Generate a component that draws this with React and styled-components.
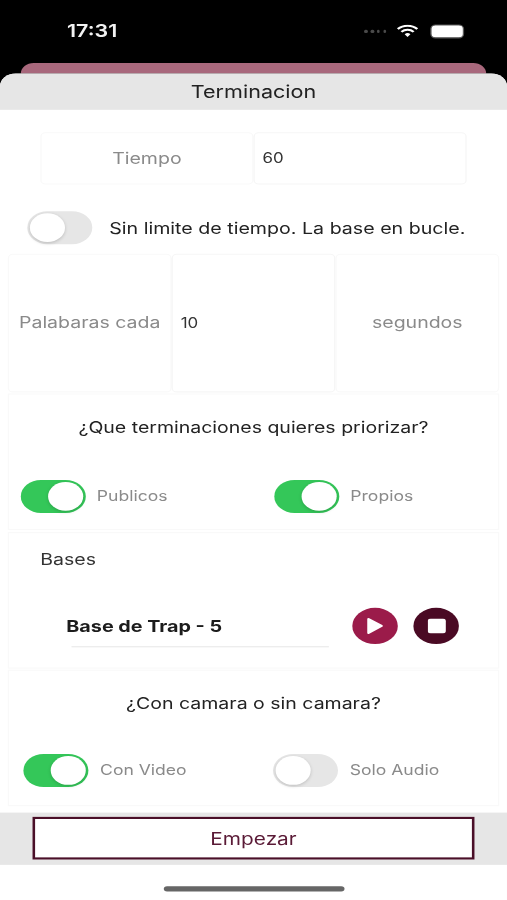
import React from "react";
import styled, { createGlobalStyle } from "styled-components";

const GlobalStyle = createGlobalStyle`
  html, body {
    margin: 0;
    padding: 0;
    background: #fff;
  }
`;

const Page = styled.div`
  width: 507px;
  height: 900px;
  overflow: hidden;
`;

// the capture is an iPhone 390x844 screen stretched to 507x900
const Screen = styled.div`
  width: 390px;
  height: 844px;
  background: #000;
  transform: scale(1.3, 1.0664);
  transform-origin: 0 0;
  filter: blur(0.35px);
  display: flex;
  flex-direction: column;
  font-family: "Inter", "Liberation Sans", sans-serif;
  color: #222;
`;

const StatusBar = styled.div`
  height: 59px;
  padding: 0 33px 1px 51.5px;
  box-sizing: border-box;
  display: flex;
  align-items: center;
  justify-content: space-between;
`;

const Clock = styled.span`
  color: #f2f2f2;
  font-size: 16.5px;
  font-weight: 600;
`;

const StatusIcons = styled.div`
  display: flex;
  align-items: center;
  gap: 8px;
`;

const SignalDots = styled.div`
  display: flex;
  gap: 2.2px;
`;

const SignalDot = styled.i`
  width: 2.5px;
  height: 3px;
  border-radius: 50%;
  background: #4a4a4a;
`;

const Battery = styled.div`
  width: 26px;
  height: 13px;
  box-sizing: border-box;
  border: 1.5px solid #5a5a5a;
  border-radius: 4px;
  background: #fff;
  margin-left: 1px;
`;

const PeekCard = styled.div`
  height: 9.5px;
  margin: 0 16px;
  background: #a8687c;
  border-radius: 10px 10px 0 0;
`;

const Sheet = styled.div`
  flex: 1;
  background: #fff;
  border-radius: 12px 12px 0 0;
  display: flex;
  flex-direction: column;
  overflow: hidden;
`;

const Header = styled.div`
  height: 34px;
  background: #e6e6e6;
  display: flex;
  align-items: center;
  justify-content: center;
  font-size: 16.6px;
  color: #222;
`;

const Cells = styled.div`
  display: grid;
  grid-auto-flow: column;
  grid-auto-columns: 1fr;
  height: ${(p) => p.$height}px;
  margin: ${(p) => p.$margin};
`;

const Cell = styled.div`
  box-sizing: border-box;
  border: 1px solid #f9f9f9;
  border-radius: 4px;
  display: flex;
  align-items: center;
  justify-content: center;
  font-size: 15px;
  color: #8a8a8a;
  white-space: nowrap;
`;

const ValueCell = styled(Cell)`
  justify-content: flex-start;
  padding-left: 6px;
  font-size: 13px;
  color: #333;
  border-color: #f6f6f6;
`;

const LoopRow = styled.div`
  display: flex;
  align-items: center;
  gap: 13px;
  height: 32px;
  margin: 25px 0 8px 21px;
  font-size: 15.1px;
  color: #222;
  white-space: nowrap;
`;

const Track = styled.div`
  width: 50px;
  height: 31px;
  box-sizing: border-box;
  padding: 2px;
  border-radius: 16px;
  background: ${(p) => (p.$on ? "#34c759" : "#e6e6e6")};
  display: flex;
  justify-content: ${(p) => (p.$on ? "flex-end" : "flex-start")};
  flex-shrink: 0;
`;

const Thumb = styled.div`
  width: 27px;
  height: 27px;
  border-radius: 50%;
  background: #fff;
  box-shadow: 0 1px 3px rgba(0, 0, 0, 0.18);
`;

const Section = styled.div`
  height: 128px;
  margin: 1.5px 6px 0;
  box-sizing: border-box;
  border: 1px solid #f9f9f9;
  display: flex;
  flex-direction: column;
`;

const Question = styled.div`
  height: 61px;
  margin-bottom: ${(p) => p.$gap}px;
  display: flex;
  align-items: center;
  justify-content: center;
  font-size: 15px;
  color: #222;
`;

const Options = styled.div`
  display: grid;
  grid-template-columns: ${(p) => p.$first}px 1fr;
  margin-left: ${(p) => p.$left}px;
  height: 31px;
`;

const Option = styled.div`
  display: flex;
  align-items: center;
  gap: 9px;
  font-size: 13.5px;
  color: #8a8a8a;
`;

const BasesLabel = styled.div`
  margin: 15.5px 0 0 24px;
  font-size: 15px;
  color: #333;
`;

const BaseRow = styled.div`
  display: flex;
  align-items: center;
  margin: 33.5px 0 0 44px;
`;

const BaseName = styled.div`
  width: 202px;
  margin-right: 18px;
  height: 39px;
  box-sizing: border-box;
  display: flex;
  align-items: center;
  font-size: 15.2px;
  font-weight: 700;
  color: #1c1c1c;
  position: relative;
  &::after {
    content: "";
    position: absolute;
    left: 4px;
    right: 0;
    bottom: 0;
    height: 1px;
    background: #e8e8e8;
  }
`;

const RoundButton = styled.button`
  width: 35px;
  height: 34px;
  padding: 0;
  border: 0;
  border-radius: 50%;
  background: ${(p) => p.$color};
  margin-right: 12px;
  display: flex;
  align-items: center;
  justify-content: center;
`;

const Footer = styled.div`
  height: 49px;
  margin-top: 5.5px;
  background: #e6e6e6;
  display: flex;
  align-items: center;
  justify-content: center;
`;

const StartButton = styled.button`
  width: 340px;
  height: 40px;
  box-sizing: border-box;
  background: #fff;
  border: 2px solid #4a0f28;
  font-family: inherit;
  font-size: 16px;
  color: #5a1a36;
`;

const HomeBar = styled.div`
  flex: 1;
  display: flex;
  align-items: flex-start;
  justify-content: center;
  padding-top: 20px;
`;

const HomeIndicator = styled.div`
  width: 139px;
  height: 5px;
  border-radius: 3px;
  background: #666;
`;

const Toggle = ({ on }) => (
  <Track $on={on}>
    <Thumb />
  </Track>
);

const App = () => {
  return (
    <Page>
      <GlobalStyle />
      <Screen>
        <StatusBar>
          <Clock>17:31</Clock>
          <StatusIcons>
            <SignalDots>
              <SignalDot />
              <SignalDot />
              <SignalDot />
              <SignalDot />
            </SignalDots>
            <svg width="17" height="12" viewBox="0 0 17 12">
              <path d="M1 4.2a10.6 10.6 0 0 1 15 0" fill="none" stroke="#fff" strokeWidth="1.9" />
              <path d="M3.8 6.9a6.6 6.6 0 0 1 9.4 0" fill="none" stroke="#fff" strokeWidth="1.9" />
              <path d="M6.3 9.2a3 3 0 0 1 4.4 0L8.5 11.6z" fill="#fff" />
            </svg>
            <Battery />
          </StatusIcons>
        </StatusBar>
        <PeekCard />
        <Sheet>
          <Header>Terminacion</Header>
          <Cells $height={49} $margin="21px 31px 0">
            <Cell>Tiempo</Cell>
            <ValueCell>60</ValueCell>
          </Cells>
          <LoopRow>
            <Toggle />
            Sin limite de tiempo. La base en bucle.
          </LoopRow>
          <Cells $height={130} $margin="0 6px">
            <Cell>Palabaras cada</Cell>
            <ValueCell>10</ValueCell>
            <Cell>segundos</Cell>
          </Cells>
          <Section>
            <Question $gap={18.5}>¿Que terminaciones quieres priorizar?</Question>
            <Options $first={195} $left={8.5}>
              <Option>
                <Toggle on />
                Publicos
              </Option>
              <Option>
                <Toggle on />
                Propios
              </Option>
            </Options>
          </Section>
          <Section>
            <BasesLabel>Bases</BasesLabel>
            <BaseRow>
              <BaseName>Base de Trap - 5</BaseName>
              <RoundButton $color="#9b1b4a">
                <svg width="13" height="16" viewBox="0 0 13 16">
                  <path d="M1.5 1.5 L11.5 8 L1.5 14.5 Z" fill="#fff" stroke="#fff" strokeWidth="2" strokeLinejoin="round" />
                </svg>
              </RoundButton>
              <RoundButton $color="#4a0a24">
                <svg width="14" height="14" viewBox="0 0 14 14">
                  <rect width="14" height="14" rx="2.5" fill="#fff" />
                </svg>
              </RoundButton>
            </BaseRow>
          </Section>
          <Section>
            <Question $gap={16.5}>¿Con camara o sin camara?</Question>
            <Options $first={192} $left={11}>
              <Option>
                <Toggle on />
                Con Video
              </Option>
              <Option>
                <Toggle />
                Solo Audio
              </Option>
            </Options>
          </Section>
          <Footer>
            <StartButton>Empezar</StartButton>
          </Footer>
          <HomeBar>
            <HomeIndicator />
          </HomeBar>
        </Sheet>
      </Screen>
    </Page>
  );
};

export default App;
